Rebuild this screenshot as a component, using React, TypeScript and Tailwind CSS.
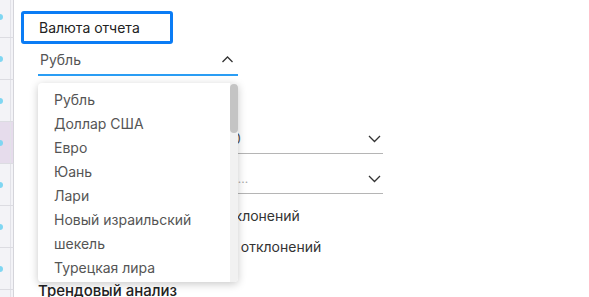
import { useState } from "react";

const currencies = [
  "Рубль",
  "Доллар США",
  "Евро",
  "Юань",
  "Лари",
  "Новый израильский шекель",
  "Турецкая лира",
  "Казахстанский тенге",
];

function Chevron({ up = false }: { up?: boolean }) {
  return (
    <svg width="13" height="8" viewBox="0 0 13 8" fill="none" stroke="#333" strokeWidth="1.3">
      {up ? <polyline points="1.5,7 6.5,2 11.5,7" /> : <polyline points="1,1 6.5,6.5 12,1" />}
    </svg>
  );
}

export default function App() {
  const [value, setValue] = useState("Рубль");
  const stripRows = [0, 1, 2, 3, 4, 5, 6, 7];

  return (
    <div className="w-[589px] h-[297px] overflow-hidden bg-white flex items-start font-['Inter',sans-serif] relative">
      {/* Left table strip */}
      <div className="w-[14px] shrink-0 flex flex-col -mt-[4px]">
        {stripRows.map((i) => (
          <div
            key={i}
            className={`h-[42px] shrink-0 border-b border-[#dcdce2] border-r border-r-[#d4d4da] flex items-center relative ${i === 3 ? "bg-[#e6dcec]" : "bg-[#f3f3f7]"
              }`}
          >
            <div className="absolute -left-[3px] w-[6px] h-[6px] rounded-full bg-[#7fd6f2]" />
            <div className="absolute left-[10px] top-0 bottom-0 w-px bg-[#e2e2e8]" />
          </div>
        ))}
      </div>

      {/* Form */}
      <div className="flex flex-col shrink-0 pl-[7px] pt-[11px] relative">
        <div className="shrink-0 w-[152px] h-[33px] border-[3px] border-[#0a7cf5] rounded-[3px] flex items-center pl-[15px] text-[14px] text-[#222]">
          Валюта отчета
        </div>

        <div className="shrink-0 ml-[17px] w-[200px] h-[32px] border-b-2 border-[#2a9df4] flex items-center justify-between pl-[2px] pr-[4px] text-[14px] text-[#555]">
          <span>{value}</span>
          <Chevron up />
        </div>

        <div className="shrink-0 ml-[17px] mt-[24px] text-[14px] leading-[14px] text-[#555] h-[14px]">Период</div>

        <div className="shrink-0 ml-[17px] w-[345px] h-[40px] pt-[10px] border-b border-[#b5b5b5] flex items-center justify-between pl-[2px] pr-[2px] text-[14px] text-[#555]">
          <span>Январь 2020 - Декабрь 2020</span>
          <Chevron />
        </div>
        <div className="shrink-0 ml-[17px] w-[345px] h-[40px] pt-[10px] border-b border-[#b5b5b5] flex items-center justify-between pl-[2px] pr-[2px] text-[14px] text-[#aaa]">
          <span className="text-[12px]">Выберите статьи бюджета и ЦФО...</span>
          <Chevron />
        </div>

        <div className="shrink-0 ml-[17px] mt-[9px] h-[24px] flex items-center gap-[10px] text-[14px] text-[#333]">
          <span className="w-[16px] h-[16px] border border-[#999] rounded-[2px]" />
          <span>Показывать без учета отклонений</span>
        </div>
        <div className="shrink-0 ml-[17px] mt-[7px] h-[24px] flex items-center gap-[10px] text-[14px] text-[#333]">
          <span className="w-[16px] h-[16px] border border-[#999] rounded-[2px]" />
          <span>Показывать с учетом тех отклонений</span>
        </div>

        <div className="shrink-0 ml-[17px] mt-[22px] text-[15px] font-medium text-[#222]">Трендовый анализ</div>

        {/* Open dropdown */}
        <div className="absolute left-[24px] top-[83px] w-[200px] h-[199px] bg-white rounded-[4px] shadow-[0_2px_8px_rgba(0,0,0,0.22)] flex overflow-hidden">
          <div className="flex-1 pt-[5px] pl-[16px] pr-[10px] flex flex-col">
            {currencies.map((c) => (
              <div
                key={c}
                onClick={() => setValue(c)}
                className="leading-[24px] text-[14px] text-[#555] cursor-pointer shrink-0"
              >
                {c}
              </div>
            ))}
          </div>
          <div className="w-[8px] bg-[#f1f1f1] flex flex-col pt-[1px]">
            <div className="h-[49px] bg-[#c4c4c4] rounded-[4px]" />
          </div>
        </div>
      </div>
    </div>
  );
}
